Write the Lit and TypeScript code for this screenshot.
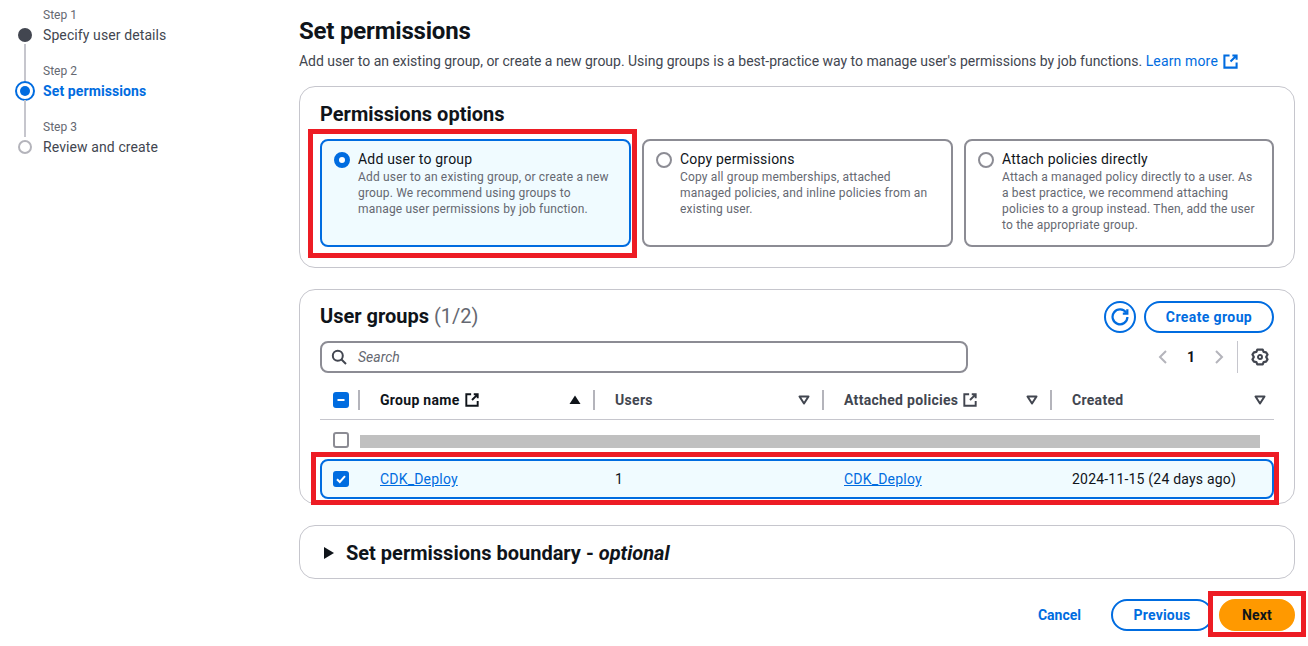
import { LitElement, css, html, svg } from "lit";
import { customElement } from "lit/decorators.js";

const external = (size = 16) => html`<svg class="ext" width=${size} height=${size} viewBox="0 0 16 16" fill="none" stroke="currentColor" stroke-width="2.2">
  <path d="M14.5 9v5.5h-13v-13H7" /><path d="M10 1.5h4.5V6M14.5 1.5 8 8" />
</svg>`;

const caret = (up = false) => html`<svg class="caret" width="12" height="12" viewBox="0 0 12 12">
  ${up
    ? svg`<path d="M6 1.5 11.5 10H.5z" fill="currentColor" />`
    : svg`<path d="M1.5 2.5h9L6 9.5z" fill="none" stroke="currentColor" stroke-width="2" stroke-linejoin="round" />`}
</svg>`;

@customElement("app-root")
export class AppRoot extends LitElement {
  static styles = css`
    :host {
      display: block;
      height: 646px;
      overflow: hidden;
      background: #fff;
      font-family: Roboto, "Noto Sans", sans-serif;
      font-size: 14px;
      line-height: 20px;
      color: #0f141a;
    }
    * {
      box-sizing: border-box;
    }
    a {
      color: #006ce0;
    }
    .page {
      display: flex;
      height: 646px;
    }

    /* wizard steps */
    .nav {
      width: 299px;
      flex: none;
      padding: 5px 0 0 15px;
    }
    .step {
      display: grid;
      grid-template-columns: 28px 1fr;
      grid-template-rows: 20px 20px 16px;
      color: #424650;
    }
    .step-label {
      grid-column: 2;
      font-size: 12px;
      color: #656871;
    }
    .step-name {
      grid-column: 2;
      grid-row: 2;
      font-size: 14px;
      letter-spacing: 0.1px;
    }
    .step-name.on {
      color: #006ce0;
      font-weight: 700;
    }
    .dot-col {
      grid-column: 1;
      grid-row: 2 / 4;
      display: flex;
      flex-direction: column;
      align-items: center;
      width: 20px;
    }
    .dot-wrap {
      height: 20px;
      flex: none;
      display: flex;
      align-items: center;
      justify-content: center;
    }
    .line {
      flex: 1;
      width: 2px;
      background: #c6c6cd;
      margin: -1px 0 -20px;
    }
    .dot {
      width: 14px;
      height: 14px;
      border-radius: 50%;
      background: #424650;
    }
    .dot.current {
      width: 20px;
      height: 20px;
      background: #fff;
      border: 2px solid #006ce0;
      padding: 3px;
    }
    .dot.current::after {
      content: "";
      display: block;
      width: 10px;
      height: 10px;
      border-radius: 50%;
      background: #006ce0;
    }
    .dot.todo {
      background: #fff;
      border: 2px solid #b4b4bb;
    }

    /* main column */
    .main {
      width: 996px;
      flex: none;
      padding-top: 15px;
    }
    h1 {
      margin: 0;
      font-size: 24px;
      line-height: 32px;
      font-weight: 700;
      letter-spacing: -0.2px;
    }
    .desc {
      margin: 4px 0 0;
      height: 25px;
      color: #424650;
      letter-spacing: -0.02px;
    }
    .desc a {
      text-decoration: none;
      display: inline-flex;
      align-items: center;
      gap: 5px;
      vertical-align: top;
      letter-spacing: 0.15px;
    }
    .panel {
      position: relative;
      border: 1px solid #c6c6cd;
      border-radius: 16px;
      background: #fff;
      padding: 0 20px;
      margin-bottom: 21px;
    }
    .panel.options {
      height: 182px;
      margin-top: 10px;
      padding-top: 14px;
    }
    h2 {
      margin: 0;
      font-size: 20px;
      line-height: 26px;
      font-weight: 700;
    }
    h2 span {
      font-weight: 400;
      color: #656871;
    }
    .tiles {
      display: grid;
      grid-template-columns: 311px 311px 310px;
      gap: 11px;
      margin-top: 12px;
    }
    .tile {
      position: relative;
      height: 108px;
      display: flex;
      gap: 8px;
      padding: 11px 16px 11px 12px;
      border: 2px solid #8c8c94;
      border-radius: 8px;
      background: #fff;
    }
    .tile.on {
      border-color: #006ce0;
      background: #f0fbff;
    }
    .radio {
      flex: none;
      width: 16px;
      height: 16px;
      border-radius: 50%;
      border: 2px solid #8c8c94;
      background: #fff;
    }
    .radio.on {
      border: 5px solid #006ce0;
    }
    .tile-title {
      display: block;
      margin-top: -3px;
      letter-spacing: 0.2px;
    }
    .tile-sub {
      display: block;
      font-size: 12px;
      line-height: 16px;
      letter-spacing: 0.17px;
      color: #656871;
    }

    /* red annotation boxes */
    .mark {
      position: absolute;
      border: 5px solid #ed1c24;
      pointer-events: none;
    }
    .mark.tile-mark {
      inset: -12px -8px -13px -14px;
    }
    .mark.row-mark {
      inset: -9px -7px -8px -11px;
    }
    .mark.next-mark {
      inset: -10px -13px -8px -13px;
    }

    /* user groups table */
    .panel.groups {
      height: 215px;
    }
    .groups-head {
      display: flex;
      align-items: center;
      justify-content: space-between;
      padding-top: 11px;
    }
    .groups-head h2 {
      margin-top: -2px;
    }
    .actions {
      display: flex;
      gap: 8px;
    }
    .btn {
      display: inline-flex;
      align-items: center;
      justify-content: center;
      height: 32px;
      border: 2px solid #006ce0;
      border-radius: 16px;
      color: #006ce0;
      font-weight: 700;
      font-size: 14px;
      letter-spacing: 0.2px;
      background: #fff;
      font-family: inherit;
    }
    .btn.icon {
      width: 32px;
      padding: 0;
    }
    .btn.create {
      width: 130px;
      letter-spacing: 0.4px;
    }
    .tools {
      display: flex;
      align-items: center;
      justify-content: space-between;
      margin-top: 8px;
      height: 32px;
    }
    .search {
      width: 648px;
      height: 32px;
      display: flex;
      align-items: center;
      gap: 11px;
      padding-left: 9px;
      border: 2px solid #8c8c94;
      border-radius: 8px;
      font-style: italic;
      font-size: 14px;
      color: #656871;
    }
    .pager {
      display: flex;
      align-items: center;
      color: #b4b4bb;
      height: 32px;
    }
    .pager b {
      width: 40px;
      text-align: center;
      color: #0f141a;
      font-size: 14px;
    }
    .pager .cog {
      height: 32px;
      margin-left: 10px;
      padding-left: 13px;
      border-left: 1px solid #c6c6cd;
      display: flex;
      align-items: center;
      color: #424650;
      margin-right: 5px;
    }
    .row {
      display: grid;
      grid-template-columns: 38px 235px 229px 228px 224px;
      align-items: center;
    }
    .row.header {
      height: 47px;
      padding-top: 7px;
      border-bottom: 1px solid #c6c6cd;
      font-weight: 700;
      font-size: 14px;
      letter-spacing: 0.3px;
      color: #424650;
    }
    .th {
      display: flex;
      align-items: center;
      justify-content: space-between;
      height: 20px;
      padding: 0 12px 0 20px;
      border-left: 2px solid #b4b4bb;
    }
    .th.dark {
      color: #0f141a;
    }
    .th.last {
      padding-right: 8px;
    }
    .th-name {
      display: flex;
      align-items: center;
      gap: 5px;
    }
    .check-cell {
      padding-left: 13px;
      display: flex;
    }
    .check-cell.in-row {
      padding-left: 11px;
    }
    .check {
      width: 16px;
      height: 16px;
      border-radius: 3px;
      background: #006ce0;
      display: flex;
      align-items: center;
      justify-content: center;
    }
    .check.off {
      background: #fff;
      border: 2px solid #8c8c94;
    }
    .row.hidden-row {
      height: 39px;
      grid-template-columns: 40px 900px;
    }
    .redacted {
      height: 13px;
      margin-top: 4px;
      background: #c0c0c0;
    }
    .row.selected {
      position: relative;
      height: 40px;
      border: 2px solid #006ce0;
      border-radius: 8px;
      background: #f0fbff;
      grid-template-columns: 38px 235px 229px 228px 220px;
    }
    .cell {
      padding-left: 20px;
      letter-spacing: 0.2px;
    }

    /* collapsed boundary section */
    .panel.boundary {
      height: 54px;
      display: flex;
      align-items: center;
      gap: 12px;
      padding: 1px 20px 0 24px;
      font-size: 20px;
      font-weight: 700;
      margin-bottom: 20px;
    }
    .tri {
      width: 0;
      height: 0;
      border-left: 10px solid #0f141a;
      border-top: 6px solid transparent;
      border-bottom: 6px solid transparent;
    }

    .footer {
      display: flex;
      justify-content: flex-end;
      align-items: center;
      height: 32px;
      gap: 30px;
    }
    .link-btn {
      color: #006ce0;
      font-weight: 700;
    }
    .btn.prev {
      width: 102px;
      margin-right: -24px;
    }
    .btn.next {
      position: relative;
      width: 76px;
      background: #ff9900;
      border-color: #ff9900;
      color: #0f141a;
    }
  `;

  private step(label: string, name: string, kind: string, last = false) {
    return html`<div class="step">
      <div class="step-label">${label}</div>
      <div class="dot-col">
        <div class="dot-wrap"><div class="dot ${kind}"></div></div>
        ${last ? "" : html`<div class="line"></div>`}
      </div>
      <div class="step-name ${kind === "current" ? "on" : ""}">${name}</div>
    </div>`;
  }

  private tile(title: string, sub: string, on = false) {
    return html`<div class="tile ${on ? "on" : ""}">
      <div class="radio ${on ? "on" : ""}"></div>
      <div>
        <span class="tile-title">${title}</span>
        <span class="tile-sub">${sub}</span>
      </div>
      ${on ? html`<div class="mark tile-mark"></div>` : ""}
    </div>`;
  }

  render() {
    return html`<div class="page">
      <nav class="nav">
        ${this.step("Step 1", "Specify user details", "")}
        ${this.step("Step 2", "Set permissions", "current")}
        ${this.step("Step 3", "Review and create", "todo", true)}
      </nav>

      <main class="main">
        <h1>Set permissions</h1>
        <p class="desc">
          Add user to an existing group, or create a new group. Using groups is a best-practice way to manage user's
          permissions by job functions.
          <a href="#">Learn more ${external(15)}</a>
        </p>

        <section class="panel options">
          <h2>Permissions options</h2>
          <div class="tiles">
            ${this.tile(
              "Add user to group",
              "Add user to an existing group, or create a new group. We recommend using groups to manage user permissions by job function.",
              true,
            )}
            ${this.tile(
              "Copy permissions",
              "Copy all group memberships, attached managed policies, and inline policies from an existing user.",
            )}
            ${this.tile(
              "Attach policies directly",
              "Attach a managed policy directly to a user. As a best practice, we recommend attaching policies to a group instead. Then, add the user to the appropriate group.",
            )}
          </div>
        </section>

        <section class="panel groups">
          <div class="groups-head">
            <h2>User groups <span>(1/2)</span></h2>
            <div class="actions">
              <button class="btn icon" aria-label="Refresh">
                <svg width="18" height="18" viewBox="0 0 16 16" fill="none" stroke="currentColor" stroke-width="2">
                  <path d="M13.5 4.2A6.6 6.6 0 1 0 14.6 8" />
                  <path d="M14.5 1v4h-4" />
                </svg>
              </button>
              <button class="btn create">Create group</button>
            </div>
          </div>
          <div class="tools">
            <div class="search">
              <svg width="16" height="16" viewBox="0 0 16 16" fill="none" stroke="#424650" stroke-width="2">
                <circle cx="6.8" cy="6.8" r="5" /><path d="m10.5 10.5 4.5 4.5" />
              </svg>
              Search
            </div>
            <div class="pager">
              <svg width="16" height="16" viewBox="0 0 16 16" fill="none" stroke="currentColor" stroke-width="2">
                <path d="M11 2 5 8l6 6" />
              </svg>
              <b>1</b>
              <svg width="16" height="16" viewBox="0 0 16 16" fill="none" stroke="currentColor" stroke-width="2">
                <path d="m5 2 6 6-6 6" />
              </svg>
              <div class="cog">
                <svg width="18" height="18" viewBox="0 0 16 16" fill="none" stroke="currentColor" stroke-width="2" stroke-linejoin="round">
                  <path d="M5.6 1.5h4.8l.8 2 2.2.4 1.3 1.9-1.2 2.2 1.2 2.2-1.3 1.9-2.2.4-.8 2H5.6l-.8-2-2.2-.4-1.3-1.9 1.2-2.2-1.2-2.2 1.3-1.9 2.2-.4z" />
                  <circle cx="8" cy="8" r="1.8" stroke-width="1.7" />
                </svg>
              </div>
            </div>
          </div>

          <div class="row header">
            <div class="check-cell">
              <div class="check">
                <svg width="10" height="10" viewBox="0 0 10 10"><path d="M1.5 5h7" stroke="#fff" stroke-width="2" /></svg>
              </div>
            </div>
            <div class="th dark"><span class="th-name">Group name ${external(14)}</span>${caret(true)}</div>
            <div class="th">Users ${caret()}</div>
            <div class="th"><span class="th-name">Attached policies ${external(14)}</span>${caret()}</div>
            <div class="th last">Created ${caret()}</div>
          </div>

          <div class="row hidden-row">
            <div class="check-cell"><div class="check off"></div></div>
            <div class="redacted"></div>
          </div>

          <div class="row selected">
            <div class="check-cell in-row">
              <div class="check">
                <svg width="12" height="12" viewBox="0 0 12 12" fill="none">
                  <path d="m2 6.2 2.8 2.8L10 3.2" stroke="#fff" stroke-width="2" />
                </svg>
              </div>
            </div>
            <div class="cell"><a href="#">CDK_Deploy</a></div>
            <div class="cell">1</div>
            <div class="cell"><a href="#">CDK_Deploy</a></div>
            <div class="cell">2024-11-15 (24 days ago)</div>
            <div class="mark row-mark"></div>
          </div>
        </section>

        <section class="panel boundary">
          <div class="tri"></div>
          <div>Set permissions boundary - <em>optional</em></div>
        </section>

        <div class="footer">
          <span class="link-btn">Cancel</span>
          <button class="btn prev">Previous</button>
          <button class="btn next">Next<span class="mark next-mark"></span></button>
        </div>
      </main>
    </div>`;
  }
}
